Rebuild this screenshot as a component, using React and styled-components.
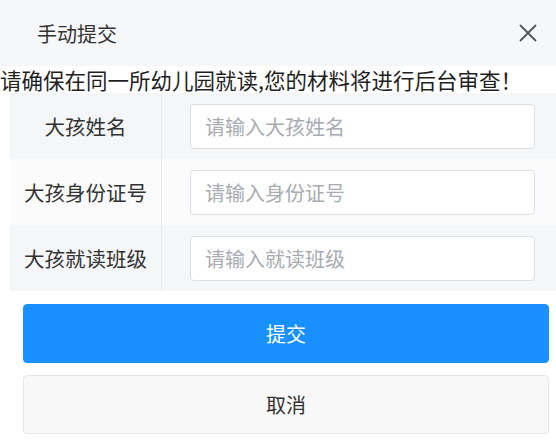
import styled, { createGlobalStyle } from "styled-components";

const GlobalStyle = createGlobalStyle`
    body {
        margin: 0;
        background: #ffffff;
        font-family: "Noto Sans CJK SC", "Noto Sans", sans-serif;
    }
    * {
        box-sizing: border-box;
    }
`

const fields = [
    { label: "大孩姓名", placeholder: "请输入大孩姓名", shaded: true },
    { label: "大孩身份证号", placeholder: "请输入身份证号", shaded: false },
    { label: "大孩就读班级", placeholder: "请输入就读班级", shaded: true },
]

const App = () => {
    return (
        <>
            <GlobalStyle />
            <Dialog>
                <Header>
                    <Title>手动提交</Title>
                    <CloseButton type="button" aria-label="关闭">
                        <svg width="18" height="18" viewBox="0 0 18 18">
                            <path d="M1.5 1.5 L16.5 16.5 M16.5 1.5 L1.5 16.5" stroke="#555" strokeWidth="1.8" strokeLinecap="round" />
                        </svg>
                    </CloseButton>
                </Header>

                <Notice>请确保在同一所幼儿园就读,您的材料将进行后台审查！</Notice>

                <Form>
                    {fields.map((field) => (
                        <Row key={field.label} shaded={field.shaded}>
                            <Label>{field.label}</Label>
                            <InputCell>
                                <Input placeholder={field.placeholder} />
                            </InputCell>
                        </Row>
                    ))}
                </Form>

                <Actions>
                    <ActionButton type="button" primary>提交</ActionButton>
                    <ActionButton type="button">取消</ActionButton>
                </Actions>
            </Dialog>
        </>
    )
}

const Dialog = styled.div`
    width: 556px;
    display: flex;
    flex-direction: column;
`

const Header = styled.div`
    height: 66px;
    background: #f6f7f9;
    display: flex;
    align-items: center;
    justify-content: space-between;
    padding: 0 18px 0 37px;
`

const Title = styled.h2`
    margin: 0;
    font-size: 20px;
    font-weight: normal;
    color: #333;
`

const CloseButton = styled.button`
    border: none;
    background: none;
    padding: 0;
    width: 20px;
    height: 20px;
    display: flex;
    align-items: center;
    justify-content: center;
    cursor: pointer;
`

const Notice = styled.p`
    margin: 0;
    height: 27px;
    line-height: 27px;
    font-size: 21.5px;
    color: #1f1f1f;
    white-space: nowrap;
`

const Form = styled.div`
    display: flex;
    flex-direction: column;
    margin-left: 10px;
`

const Row = styled.div`
    display: grid;
    grid-template-columns: 152px 1fr;
    height: 66px;
    background: ${({ shaded }) => (shaded ? "#f5f6f8" : "#fbfbfc")};
`

const Label = styled.div`
    display: flex;
    align-items: center;
    justify-content: center;
    border-right: 1px solid #e9ebef;
    font-size: 20.5px;
    color: #333;
`

const InputCell = styled.div`
    display: flex;
    align-items: center;
    padding: 0 21px 0 28px;
`

const Input = styled.input`
    width: 100%;
    height: 45px;
    border: 1px solid #dcdfe4;
    border-radius: 4px;
    background: #ffffff;
    padding: 0 14px;
    font-family: inherit;
    font-size: 20px;
    color: #333;
    outline: none;

    &::placeholder {
        color: #a8abb2;
    }
`

const Actions = styled.div`
    display: flex;
    flex-direction: column;
    gap: 12px;
    padding: 13px 7px 0 23px;
`

const ActionButton = styled.button`
    height: 59px;
    border-radius: 4px;
    font-family: inherit;
    font-size: 20px;
    cursor: pointer;
    border: 1px solid ${({ primary }) => (primary ? "#1890ff" : "#e6e6e6")};
    background: ${({ primary }) => (primary ? "#1890ff" : "#f8f8f8")};
    color: ${({ primary }) => (primary ? "#ffffff" : "#333")};
`

export default App;
